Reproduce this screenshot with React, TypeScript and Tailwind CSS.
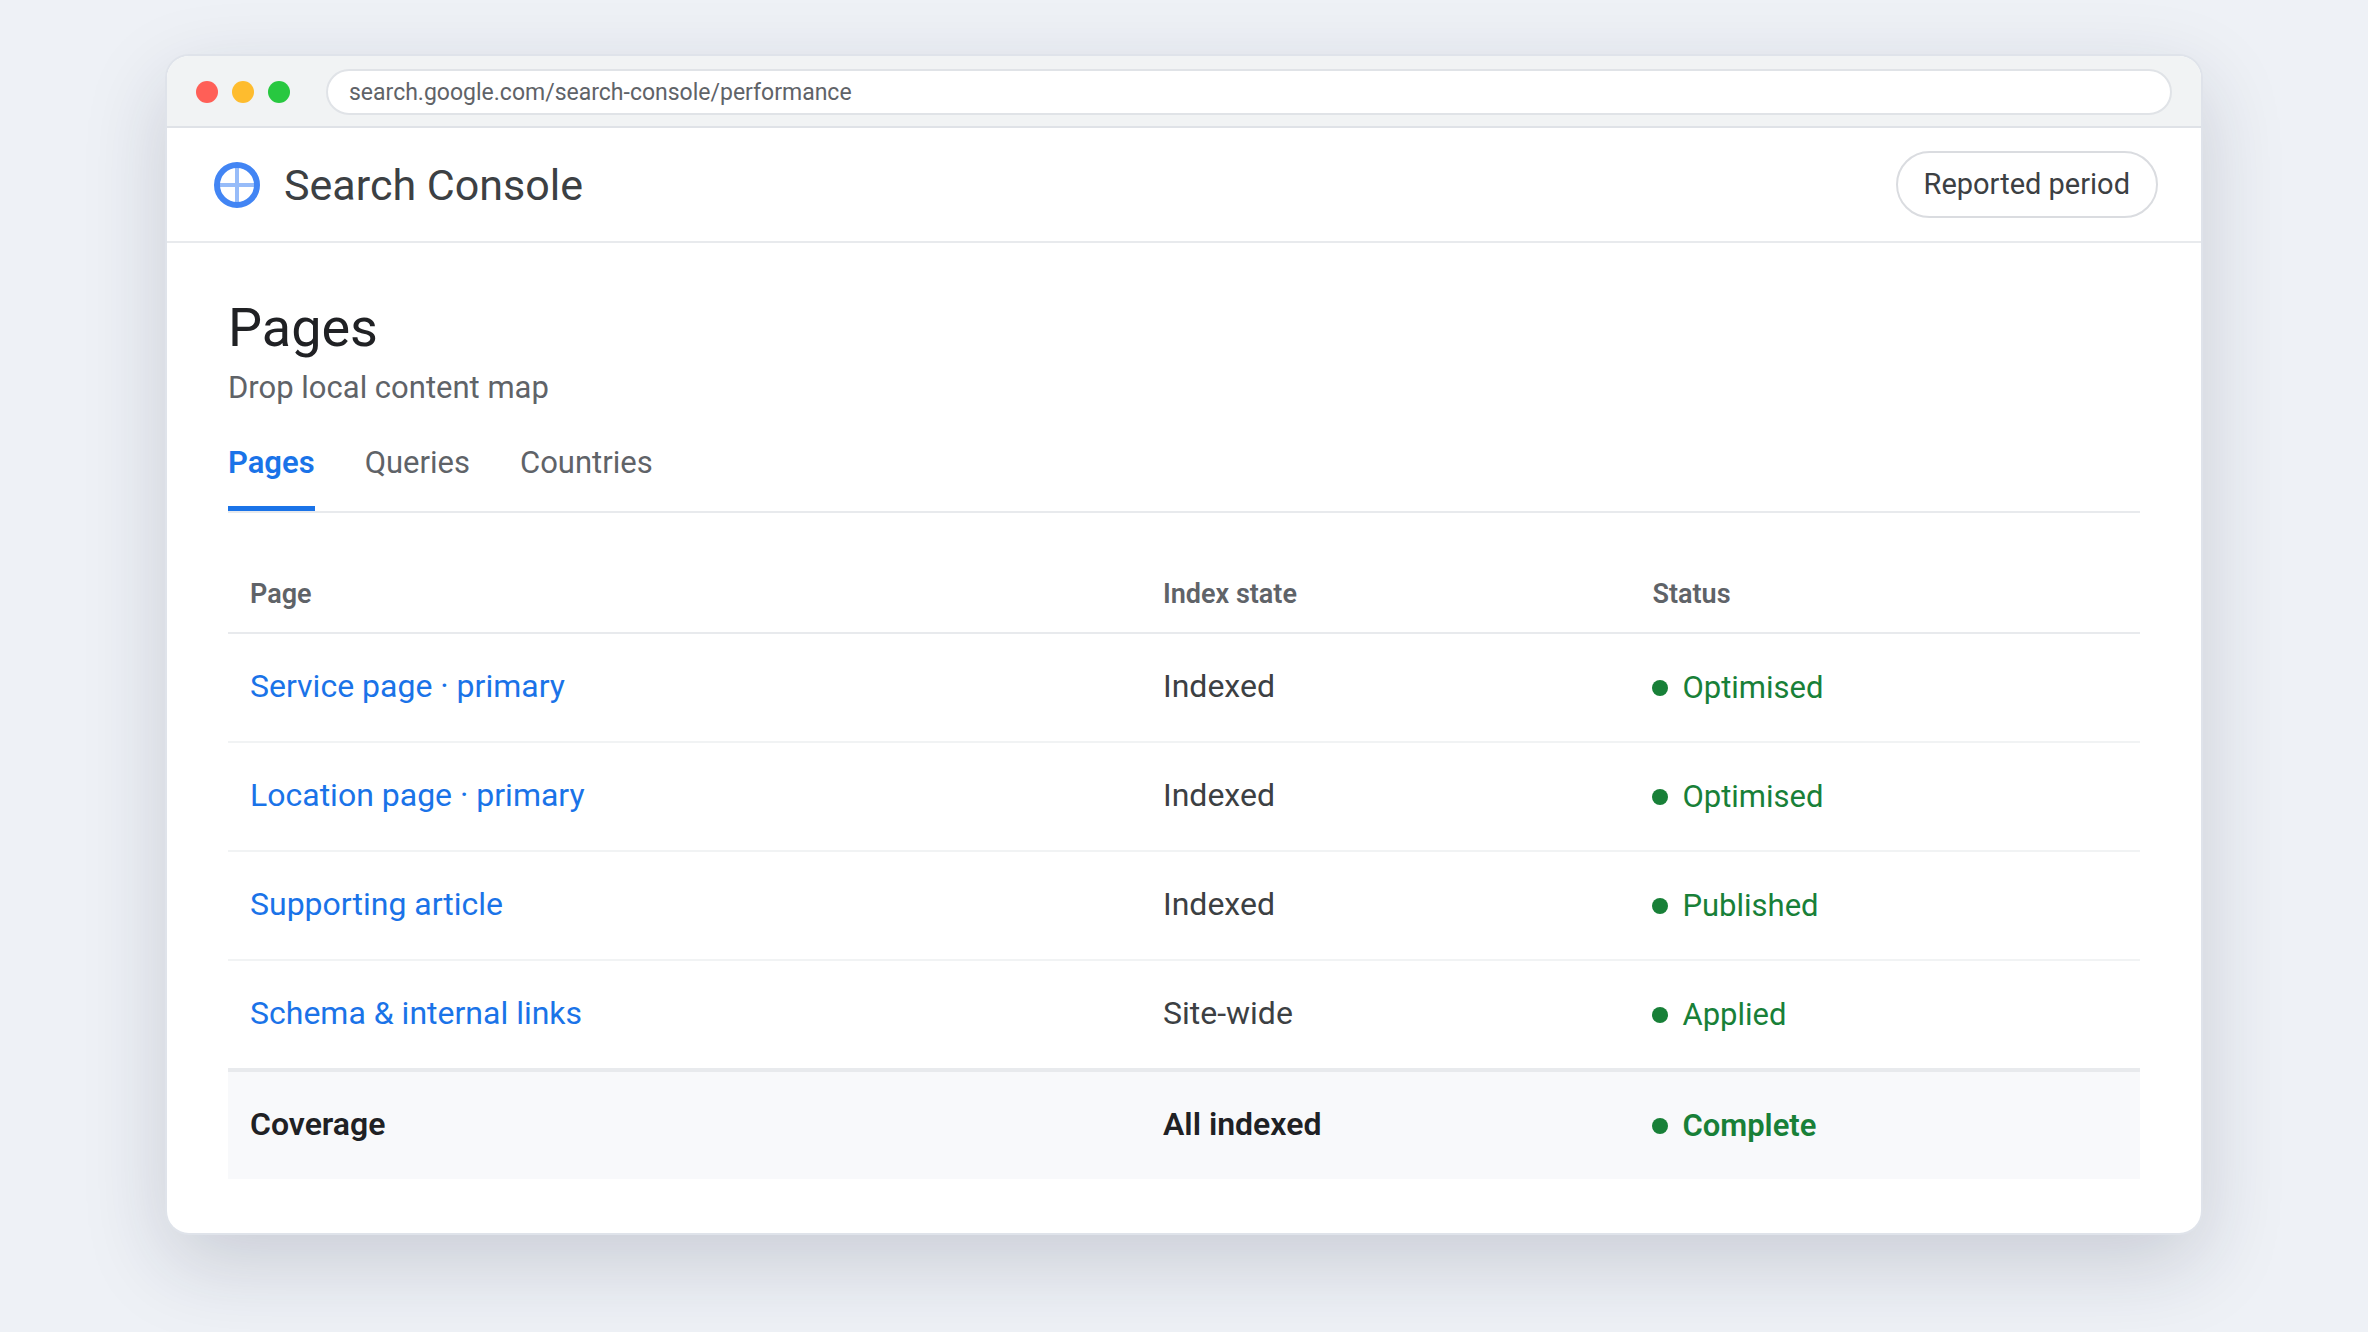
import React, { useState } from 'react';
import { clsx } from 'clsx';

interface PageRow {
  page: string;
  indexState: string;
  status: string;
}

const tabs = ['Pages', 'Queries', 'Countries'];

const rows: PageRow[] = [
  { page: 'Service page · primary', indexState: 'Indexed', status: 'Optimised' },
  { page: 'Location page · primary', indexState: 'Indexed', status: 'Optimised' },
  { page: 'Supporting article', indexState: 'Indexed', status: 'Published' },
  { page: 'Schema & internal links', indexState: 'Site-wide', status: 'Applied' },
];

function Status({ label }: { label: string }) {
  return (
    <span className="inline-flex items-center gap-[14px] text-[31px] leading-9 text-[#188038]">
      <span className="size-4 rounded-full bg-[#188038]" />
      {label}
    </span>
  );
}

function BrowserBar() {
  return (
    <div className="flex items-center gap-9 border-b-2 border-[#dfe2e7] bg-[#f1f3f4] px-[29px] pt-[13px] pb-[11px]">
      {/* Window buttons */}
      <div className="flex gap-[14px]">
        <span className="size-[22px] rounded-full bg-[#ff5f57]" />
        <span className="size-[22px] rounded-full bg-[#febc2e]" />
        <span className="size-[22px] rounded-full bg-[#28c840]" />
      </div>
      <input
        type="text"
        aria-label="Address"
        defaultValue="search.google.com/search-console/performance"
        className="h-[46px] min-w-0 flex-1 rounded-full border-2 border-[#e0e3e7] bg-white px-[21px] text-[23px] text-[#5f6368] outline-none"
      />
    </div>
  );
}

function Header() {
  return (
    <header className="flex items-center justify-between border-b-2 border-[#e8eaed] px-[43px] py-[23px]">
      <div className="flex items-center gap-5">
        <svg viewBox="0 0 54 54" className="size-[54px]" fill="none" stroke="#4285f4" aria-hidden="true">
          <path d="M27 7v40M7 27h40" strokeWidth="4" opacity="0.55" />
          <circle cx="27" cy="27" r="20" strokeWidth="6" />
        </svg>
        <span className="text-[43px] leading-[52px] text-[#3c4043]">Search Console</span>
      </div>
      <button
        type="button"
        className="rounded-full border-2 border-[#dadce0] px-[26px] py-[13px] text-[29px] leading-[37px] text-[#3c4043]"
      >
        Reported period
      </button>
    </header>
  );
}

export default function App() {
  const [activeTab, setActiveTab] = useState('Pages');

  return (
    <div className="min-h-screen bg-[#eef1f6] px-[167px] pt-14 pb-24 font-[Roboto,sans-serif]">
      <div className="overflow-hidden rounded-[22px] bg-white shadow-[0_0_0_2px_#dfe3ea,0_28px_84px_rgba(30,36,60,0.18)]">
        <BrowserBar />
        <Header />

        <main className="px-[61px] pt-[53px] pb-[54px]">
          <h1 className="text-[54px] leading-[64px] text-[#202124]">Pages</h1>
          <p className="mt-[10px] text-[31px] leading-9 text-[#5f6368]">Drop local content map</p>

          {/* Tabs */}
          <div role="tablist" className="mt-[31px] flex gap-[50px] border-b-2 border-[#e8eaed]">
            {tabs.map((tab) => (
              <button
                key={tab}
                type="button"
                role="tab"
                aria-selected={tab === activeTab}
                onClick={() => setActiveTab(tab)}
                className={clsx(
                  'cursor-pointer border-b-5 pt-2 pb-[25px] text-[31px] leading-9',
                  tab === activeTab
                    ? 'border-[#1a73e8] font-semibold text-[#1a73e8]'
                    : 'border-transparent text-[#5f6368]'
                )}
              >
                {tab}
              </button>
            ))}
          </div>

          <table className="mt-[52px] w-full table-fixed border-collapse text-left">
            <colgroup>
              <col className="w-[47.75%]" />
              <col className="w-[25.6%]" />
              <col />
            </colgroup>
            <thead>
              <tr className="border-b-2 border-[#e8eaed] text-[27px] leading-8 text-[#5f6368]">
                <th scope="col" className="px-[22px] pt-[13px] pb-[22px] font-semibold">Page</th>
                <th scope="col" className="px-[22px] pt-[13px] pb-[22px] font-semibold">Index state</th>
                <th scope="col" className="px-[22px] pt-[13px] pb-[22px] font-semibold">Status</th>
              </tr>
            </thead>
            <tbody className="text-[32px] leading-[39px] text-[#3c4043]">
              {rows.map((row) => (
                <tr key={row.page} className="border-b-2 border-[#f1f3f4]">
                  <td className="px-[22px] pt-8 pb-[35px]">
                    <a href="#" className="text-[#1a73e8]">{row.page}</a>
                  </td>
                  <td className="px-[22px] pt-8 pb-[35px]">{row.indexState}</td>
                  <td className="px-[22px] pt-8 pb-[35px]">
                    <Status label={row.status} />
                  </td>
                </tr>
              ))}
            </tbody>
            <tfoot className="text-[32px] leading-[39px] font-semibold text-[#202124]">
              <tr className="border-t-4 border-[#e8eaed] bg-[#f8f9fb]">
                <td className="px-[22px] pt-8 pb-[35px]">Coverage</td>
                <td className="px-[22px] pt-8 pb-[35px]">All indexed</td>
                <td className="px-[22px] pt-8 pb-[35px]">
                  <Status label="Complete" />
                </td>
              </tr>
            </tfoot>
          </table>
        </main>
      </div>
    </div>
  );
}
